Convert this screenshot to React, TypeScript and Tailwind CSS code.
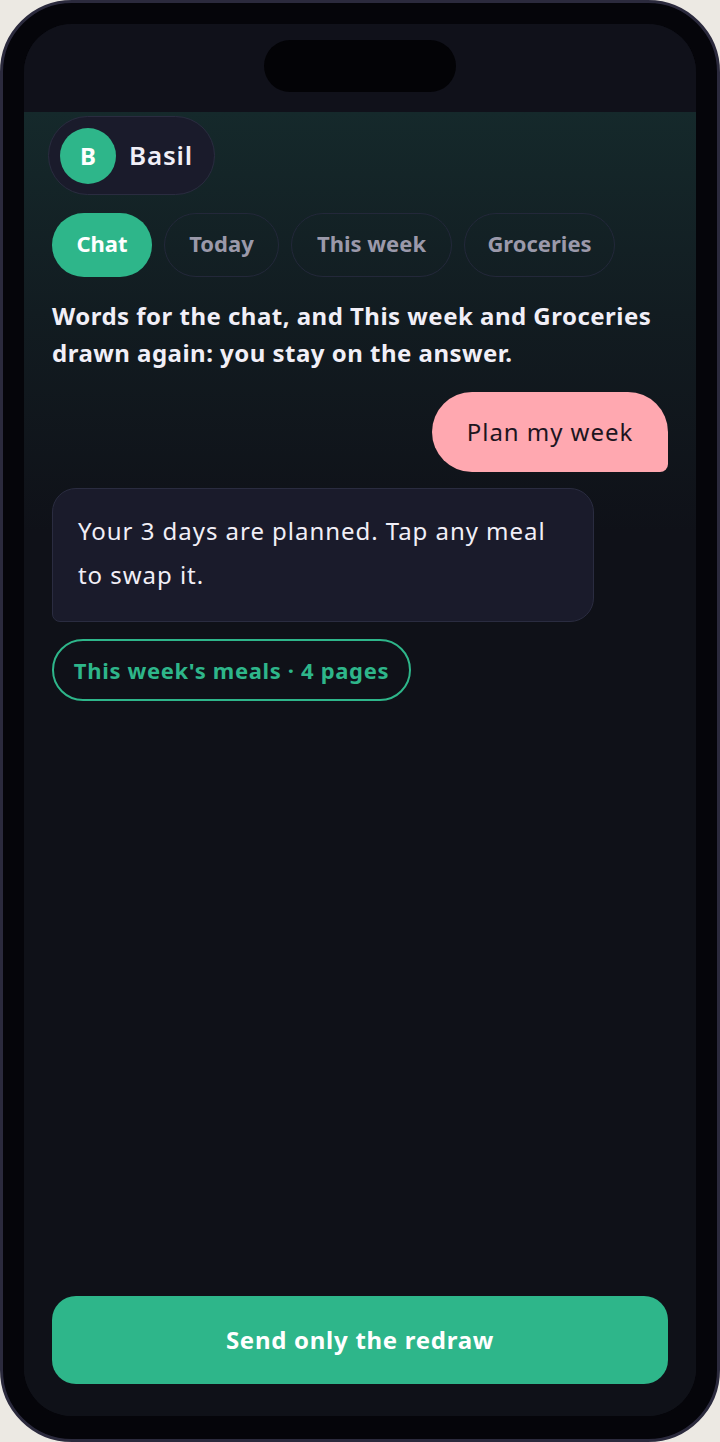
import React from "react";

export default function App() {
  const font = { fontFamily: "'Noto Sans', 'Open Sans', sans-serif" };
  return (
    <div className="w-[720px] h-[1442px] bg-[#ece9e3]" style={font}>
      <div className="w-full h-full rounded-[72px] bg-[#05050a] border-[3px] border-[#2b2a3d] pt-[21px] px-[21px] pb-[23px]">
        <div className="w-full h-full rounded-[48px] bg-[#0f1118] overflow-hidden flex flex-col">
          <div className="h-[88px] shrink-0 bg-[#10111a] flex justify-center pt-[16px]">
            <div className="w-[192px] h-[52px] rounded-full bg-[#030306]" />
          </div>
          <div className="flex-1 flex flex-col px-[28px] pt-[4px] pb-[32px] bg-[linear-gradient(180deg,#15292b_0px,#121c21_200px,#0f1118_420px)]">
            <div className="flex">
              <div className="flex items-center gap-[13px] h-[79px] w-[167px] pl-[11px] -ml-[4px] rounded-full bg-[#1a1b2b] border border-[#2a2c40]">
                <div className="w-[56px] h-[56px] rounded-full bg-[#2eb68a] flex items-center justify-center text-white font-bold text-[24px]">B</div>
                <span className="text-[26px] font-semibold tracking-[0.03em] text-[#f1eff7]">Basil</span>
              </div>
            </div>
            <div className="flex gap-[12px] mt-[18px]">
              <div className="h-[64px] w-[100px] pb-[3px] rounded-full bg-[#2eb68a] text-white font-bold text-[22px] flex items-center justify-center">Chat</div>
              <div className="h-[64px] w-[115px] pb-[3px] rounded-full border border-[#23283a] text-[#9b99aa] font-bold text-[22px] flex items-center justify-center">Today</div>
              <div className="h-[64px] w-[161px] pb-[3px] rounded-full border border-[#23283a] text-[#9b99aa] font-bold text-[22px] flex items-center justify-center">This week</div>
              <div className="h-[64px] w-[151px] pb-[3px] rounded-full border border-[#23283a] text-[#9b99aa] font-bold text-[22px] flex items-center justify-center">Groceries</div>
            </div>
            <p className="mt-[20px] text-[24px] leading-[37px] font-bold tracking-[0.02em] text-[#f1eff7]">
              Words for the chat, and This week and Groceries drawn again: you stay on the answer.
            </p>
            <div className="flex justify-end mt-[21px]">
              <div className="h-[80px] w-[236px] justify-center flex items-center rounded-[40px] rounded-br-[8px] bg-[#ffa8b0] text-[#1d1520] text-[24px] tracking-[0.04em]">Plan my week</div>
            </div>
            <div className="flex mt-[16px]">
              <div className="w-[542px] rounded-[24px] rounded-bl-[8px] bg-[#1a1b2b] border border-[#2a2c40] px-[25px] pt-[20px] pb-[24px] text-[24px] leading-[44px] tracking-[0.04em] text-[#f1eff7]">
                Your 3 days are planned. Tap any meal to swap it.
              </div>
            </div>
            <div className="flex mt-[17px]">
              <div className="h-[62px] w-[359px] justify-center rounded-full border-2 border-[#2eb68a] text-[#2eb68a] font-bold text-[22px] tracking-[0.03em] flex items-center">This week's meals · 4 pages</div>
            </div>
            <div className="flex-1" />
            <div className="h-[88px] rounded-[24px] bg-[#2eb68a] text-white font-bold text-[24px] tracking-[0.03em] flex items-center justify-center">Send only the redraw</div>
          </div>
        </div>
      </div>
    </div>
  );
}
